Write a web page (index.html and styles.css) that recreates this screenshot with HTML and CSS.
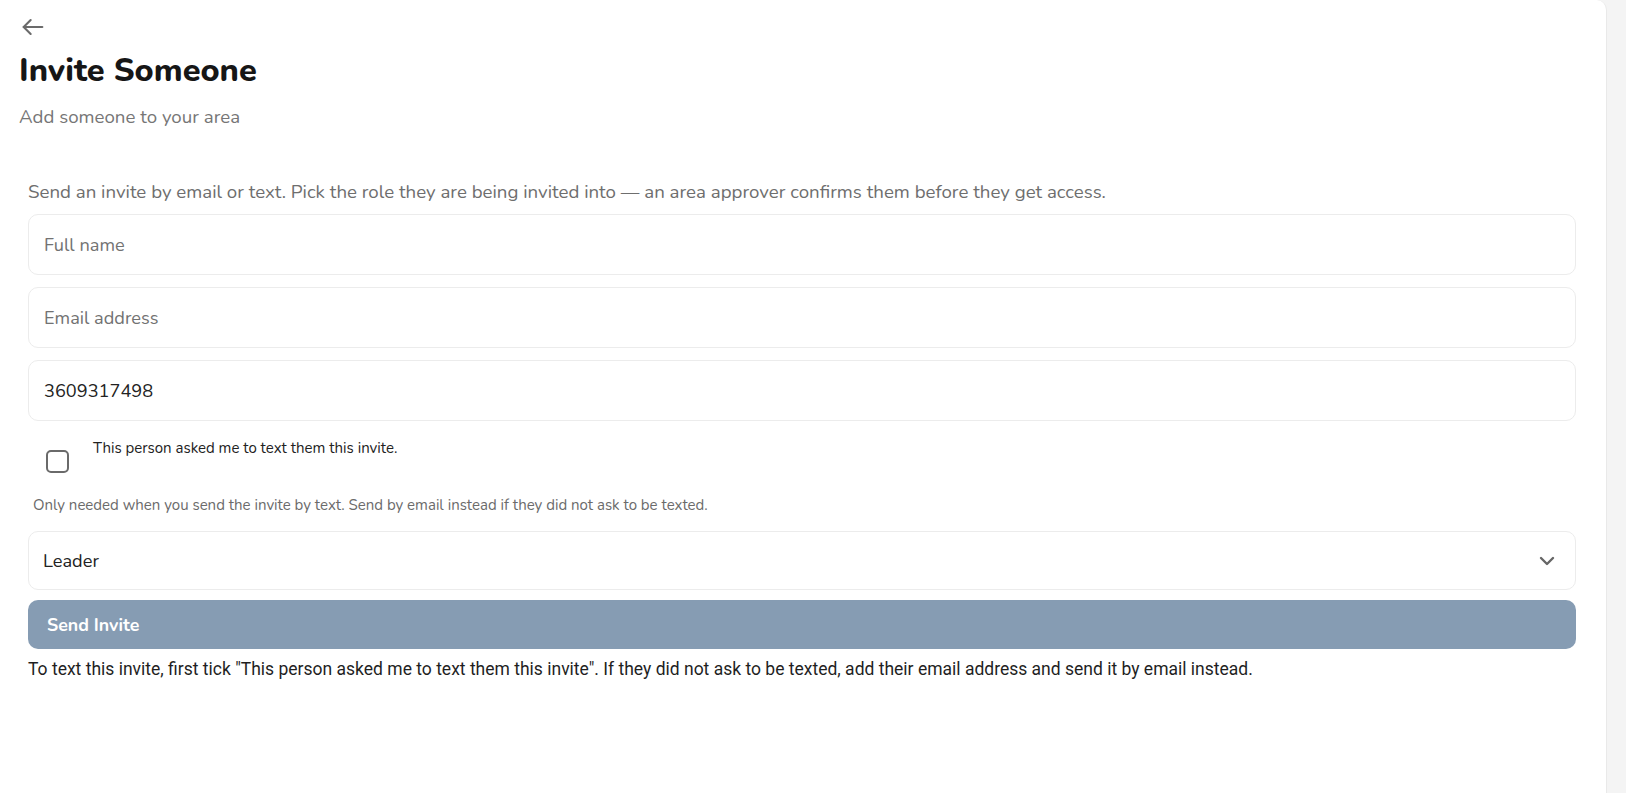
FILE: index.html
```html
<!DOCTYPE html>
<html lang="en">
<head>
    <meta charset="UTF-8">
    <meta name="viewport" content="width=device-width, initial-scale=1.0">
    <title>Invite Someone</title>
    <link rel="stylesheet" href="styles.css">
</head>
<body>

    <div class="page">
        <div class="page-header">
            <button type="button" class="back-btn" aria-label="Back">
                <svg width="28" height="28" viewBox="0 0 24 24" fill="none" stroke="#6b6b6b" stroke-width="1.8" stroke-linecap="round" stroke-linejoin="round">
                    <path d="M20 12H4"/>
                    <path d="M10 6l-6 6 6 6"/>
                </svg>
            </button>
            <h1>Invite Someone</h1>
            <p class="subtitle">Add someone to your area</p>
        </div>

        <form class="invite-form" id="invite-form">
            <p class="intro">Send an invite by email or text. Pick the role they are being invited into — an area approver confirms them before they get access.</p>

            <input type="text" class="field" placeholder="Full name">
            <input type="email" class="field" placeholder="Email address">
            <input type="tel" class="field" value="3609317498" placeholder="Phone number">

            <label class="consent">
                <input type="checkbox" id="text-consent">
                <span class="box"></span>
                <span class="consent-text">This person asked me to text them this invite.</span>
            </label>
            <p class="helper">Only needed when you send the invite by text. Send by email instead if they did not ask to be texted.</p>

            <div class="select-wrap">
                <select class="field">
                    <option value="leader" selected>Leader</option>
                    <option value="member">Member</option>
                    <option value="approver">Approver</option>
                </select>
                <svg class="chevron" width="16" height="10" viewBox="0 0 16 10" fill="none" stroke="#666" stroke-width="2.4" stroke-linecap="round" stroke-linejoin="round">
                    <path d="M2 2l6 6 6-6"/>
                </svg>
            </div>

            <button type="submit" class="send-btn" disabled>Send Invite</button>
            <p class="notice">To text this invite, first tick "This person asked me to text them this invite". If they did not ask to be texted, add their email address and send it by email instead.</p>
        </form>
    </div>

</body>
</html>
```

FILE: styles.css
```css
body {
    margin: 0;
    padding: 0;
    background-color: #f4f4f4;
    font-family: "Nunito", Lato, "Noto Sans", sans-serif;
    color: #1a1a1a;
}

.page {
    width: 1607px;
    min-height: 100vh;
    box-sizing: border-box;
    background-color: #fff;
    border-right: 1px solid #e9e9e9;
    border-top-right-radius: 10px;
}

.page-header {
    padding: 13px 19px 0;
}

.back-btn {
    display: block;
    padding: 0;
    margin: 0;
    border: none;
    background: none;
    cursor: pointer;
    height: 28px;
}

h1 {
    margin: 9px 0 0;
    font-size: 32.5px;
    font-weight: 800;
    line-height: 40px;
    color: #161616;
}

.subtitle {
    margin: 15px 0 0;
    font-size: 18.7px;
    line-height: 24px;
    color: #767676;
}

.invite-form {
    padding: 51px 30px 40px 28px;
}

.intro {
    margin: 0 0 10px;
    font-size: 18.7px;
    line-height: 24px;
    color: #6e6e6e;
}

.field {
    display: block;
    width: 100%;
    height: 61px;
    box-sizing: border-box;
    margin: 0 0 12px;
    padding: 0 15px;
    border: 1px solid #ececec;
    border-radius: 10px;
    background-color: #fff;
    font-family: inherit;
    font-size: 18.2px;
    color: #222;
    outline: none;
}

.field::placeholder {
    color: #727272;
}

.consent {
    display: flex;
    align-items: flex-start;
    padding: 5px 0 0 18px;
    cursor: pointer;
}

.consent input {
    display: none;
}

.box {
    flex: none;
    width: 19px;
    height: 19px;
    margin-top: 12px;
    border: 2px solid #6a6a6a;
    border-radius: 5px;
}

.consent input:checked + .box {
    background-color: #6a6a6a;
}

.consent-text {
    margin-left: 24px;
    font-size: 15px;
    line-height: 20px;
    color: #222;
}

.helper {
    margin: 22px 0 0 5px;
    font-size: 15px;
    line-height: 20px;
    color: #6b6b6b;
}

.select-wrap {
    position: relative;
    margin-top: 16px;
}

.select-wrap .field {
    height: 59px;
    margin-bottom: 10px;
    padding-left: 14px;
    appearance: none;
    -webkit-appearance: none;
    cursor: pointer;
}

.chevron {
    position: absolute;
    right: 21px;
    top: 25px;
    pointer-events: none;
}

.send-btn {
    display: block;
    width: 100%;
    height: 49px;
    padding: 0 19px;
    border: none;
    border-radius: 10px;
    background-color: #869cb3;
    color: #fff;
    font-family: inherit;
    font-size: 17.8px;
    font-weight: 700;
    text-align: left;
}

.notice {
    margin: 8px 0 0;
    font-family: Roboto, sans-serif;
    font-size: 17.5px;
    line-height: 24px;
    color: #1f1f1f;
}
```
